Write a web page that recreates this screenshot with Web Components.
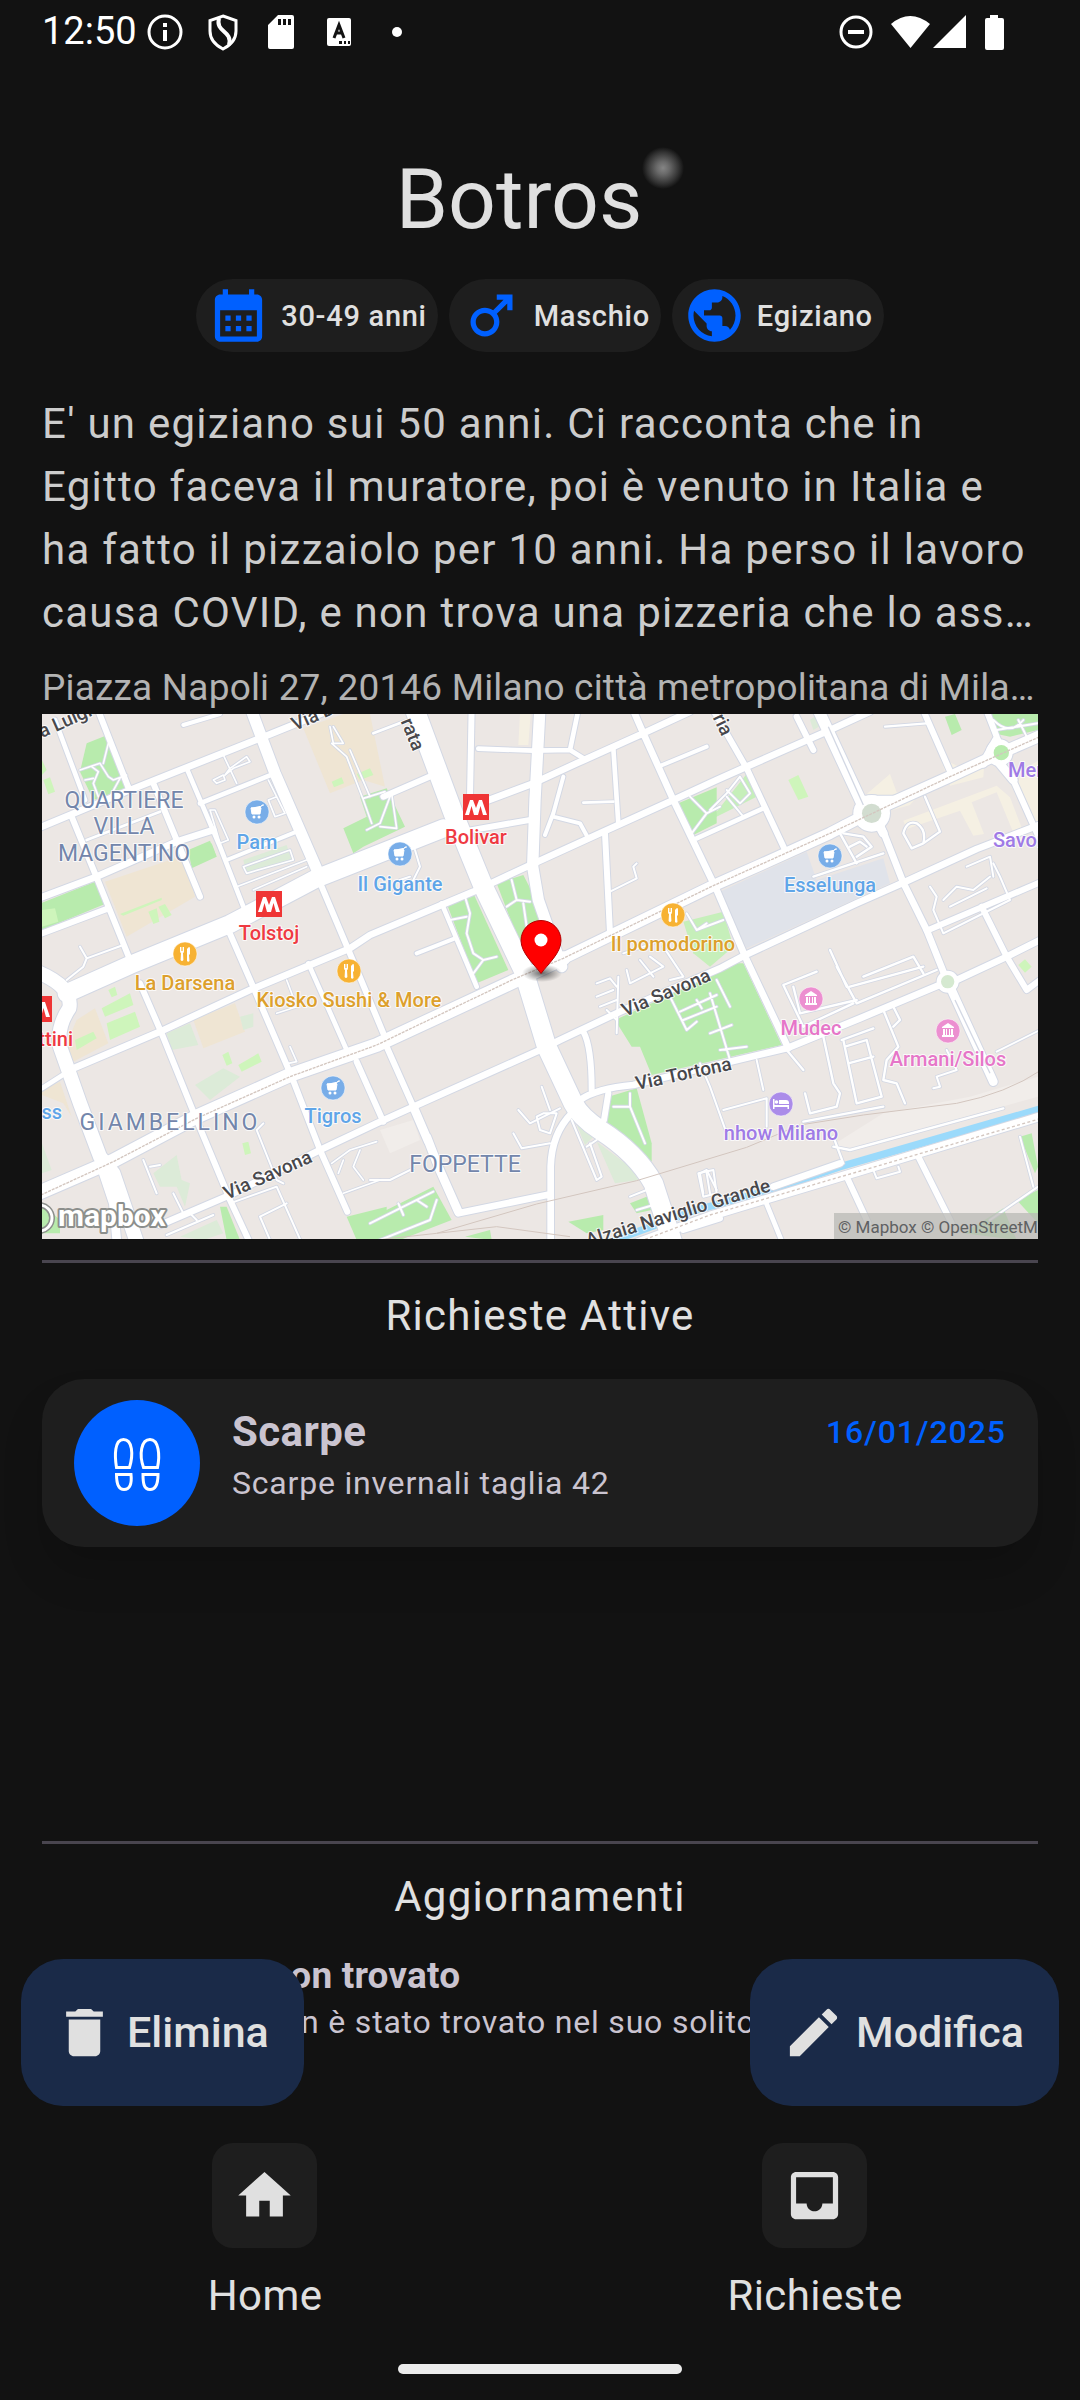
<!DOCTYPE html>
<html lang="it">
<head>
<meta charset="utf-8">
<meta name="viewport" content="width=device-width, initial-scale=1">
<title>Botros</title>
<style>
  html, body { margin: 0; background: #121212; }
  body {
    --bg: #121212; --surface: #1e1e1e; --text: #e0e0e0; --muted: #cac4d0; --accent: #0060ff;
    --track-body: .03em; --track-small: .025em; --track-label: .01em;
    font-family: Roboto, "Noto Sans", sans-serif; color: var(--text);
  }
</style>
</head>
<body>
<app-screen>
  <status-bar slot="status"></status-bar>
  <person-header name="Botros">
    <info-chip icon="calendar">30-49 anni</info-chip>
    <info-chip icon="male">Maschio</info-chip>
    <info-chip icon="globe">Egiziano</info-chip>
  </person-header>
  <person-about>
    E' un egiziano sui 50 anni. Ci racconta che in Egitto faceva il muratore, poi è venuto in Italia e ha fatto il pizzaiolo per 10 anni. Ha perso il lavoro causa COVID, e non trova una pizzeria che lo ass…
    <span slot="address">Piazza Napoli 27, 20146 Milano città metropolitana di Mila…</span>
  </person-about>
  <city-map></city-map>
  <list-section heading="Richieste Attive" grow>
    <request-card heading="Scarpe" date="16/01/2025">Scarpe invernali taglia 42</request-card>
  </list-section>
  <list-section heading="Aggiornamenti" class="updates">
    <update-row heading="Botros non trovato">Botros, non è stato trovato nel suo solito posto</update-row>
  </list-section>
  <action-button slot="actions" icon="trash">Elimina</action-button>
  <action-button slot="actions" icon="pencil">Modifica</action-button>
  <bottom-nav slot="nav">
    <nav-item icon="home">Home</nav-item>
    <nav-item icon="inbox">Richieste</nav-item>
  </bottom-nav>
</app-screen>

<script>
const ICONS = {
  calendar: '<path d="M19 4h-1V2h-2v2H8V2H6v2H5c-1.1 0-2 .9-2 2v14c0 1.100.9 2 2 2h14c1.100 0 2-.9 2-2V6c0-1.100-.9-2-2-2zm0 16H5V10h14v10zM9 14H7v-2h2v2zm4 0h-2v-2h2v2zm4 0h-2v-2h2v2zm-8 4H7v-2h2v2zm4 0h-2v-2h2v2zm4 0h-2v-2h2v2z"/>',
  male: '<path d="M9.500 11c1.930 0 3.500 1.570 3.500 3.500S11.430 18 9.500 18 6 16.430 6 14.500 7.570 11 9.500 11zm0-2C6.460 9 4 11.460 4 14.500S6.460 20 9.500 20s5.500-2.460 5.500-5.500c0-1.160-.36-2.230-.97-3.120L18 7.420V10h2V4h-6v2h2.580l-3.970 3.970C11.730 9.360 10.660 9 9.500 9z"/>',
  globe: '<path d="M12 2C6.480 2 2 6.480 2 12s4.480 10 10 10 10-4.480 10-10S17.520 2 12 2zm-1 17.930c-3.950-.49-7-3.850-7-7.930 0-.62.080-1.210.21-1.790L9 15v1c0 1.100.9 2 2 2v1.930zm6.900-2.540c-.26-.81-1-1.390-1.900-1.390h-1v-3c0-.55-.45-1-1-1H8v-2h2c.55 0 1-.45 1-1V7h2c1.100 0 2-.9 2-2v-.41c2.930 1.190 5 4.060 5 7.410 0 2.080-.8 3.970-2.100 5.390z"/>',
  trash: '<path d="M6 19c0 1.100.9 2 2 2h8c1.100 0 2-.9 2-2V7H6v12zM19 4h-3.500l-1-1h-5l-1 1H5v2h14V4z"/>',
  pencil: '<path d="M3 17.250V21h3.750L17.810 9.940l-3.750-3.750L3 17.250zM20.710 7.040c.39-.39.39-1.020 0-1.410l-2.340-2.340c-.39-.39-1.020-.39-1.410 0l-1.830 1.830 3.750 3.750 1.830-1.830z"/>',
  home: '<path d="M10 20v-6h4v6h5v-8h3L12 3 2 12h3v8z"/>',
  inbox: '<path d="M19 3H4.990c-1.110 0-1.980.89-1.980 2L3 19c0 1.100.88 2 1.990 2H19c1.100 0 2-.9 2-2V5c0-1.110-.9-2-2-2zm0 12h-4c0 1.660-1.350 3-3 3s-3-1.340-3-3H4.990V5H19v10z"/>'
};
const icon = (name) => `<svg class="icon" viewBox="0 0 24 24" aria-hidden="true">${ICONS[name]}</svg>`;
const ICON_CSS = '.icon{width:63px;height:63px;fill:currentColor;flex:none;display:block}';

function define(tag, render) {
  customElements.define(tag, class extends HTMLElement {
    constructor() { super(); this.attachShadow({ mode: 'open' }); }
    connectedCallback() { this.shadowRoot.innerHTML = render(this); }
  });
}

define('app-screen', () => `
  <style>
    :host { display: flex; flex-direction: column; min-height: 100vh; background: var(--bg); }
    main { flex: 1; display: flex; flex-direction: column; padding: 0 42px; position: relative; }
    .actions { position: absolute; left: 21px; right: 21px; bottom: 21px; display: flex; justify-content: space-between; }
  </style>
  <slot name="status"></slot>
  <main><slot></slot><div class="actions"><slot name="actions"></slot></div></main>
  <slot name="nav"></slot>`);

define('status-bar', () => `
  <style>
    :host { display: flex; justify-content: space-between; align-items: center; height: 63px; padding: 0 73px 0 42px; color: #fff; }
    div { display: flex; align-items: center; }
    time { font-size: 38px; line-height: 63px; }
    svg { display: block; height: 38px; fill: currentColor; }
    .icons { gap: 20px; margin-left: 9px; }
  </style>
  <div>
    <time>12:50</time>
    <div class="icons">
    <svg width="38" viewBox="0 0 38 38"><circle cx="19" cy="19" r="16" fill="none" stroke="#fff" stroke-width="3"/><path d="M17 17h4v11h-4zM17 10h4v4h-4z"/></svg>
    <svg width="38" viewBox="0 0 38 38"><path d="M19 3 32 7.500v10.500c0 8-5 14-13 18C11 32 6 26 6 18V7.500z" fill="none" stroke="#fff" stroke-width="3"/><path d="M15 5c-4 15 14 12 10 27" fill="none" stroke="#fff" stroke-width="4"/></svg>
    <svg width="38" viewBox="0 0 38 38"><path fill-rule="evenodd" d="M16 2h14q2 0 2 2v30q0 2-2 2H8q-2 0-2-2V12zm0 4v6h3V6zm5 0v6h3V6zm5 0v6h3V6z"/></svg>
    <svg width="38" viewBox="0 0 38 38"><rect x="7" y="5" width="24" height="28" rx="2"/><path d="m14 25 5-13 5 13m-8-5h6" fill="none" stroke="#121212" stroke-width="3"/><path d="M19 28h3v3h-3zm5 0h2v3h-2zm4 0h2v3h-2z" fill="#121212"/></svg>
    <svg width="38" viewBox="0 0 38 38"><circle cx="19" cy="19" r="5"/></svg>
    </div>
  </div>
  <div>
    <svg width="38" viewBox="0 0 38 38"><circle cx="19" cy="19" r="15" fill="none" stroke="#fff" stroke-width="3"/><path d="M11 17h16v4H11z"/></svg>
    <svg width="132" viewBox="0 0 132 38"><path d="M16 11Q35-5 55 11L35.500 35zM58 35 91 2v33z"/><path d="M115 2h8v3h4q2 0 2 2v28q0 2-2 2h-15q-2 0-2-2V7q0-2 2-2h3z"/></svg>
  </div>`);

define('person-header', (el) => `
  <style>
    :host { display: block; padding: 84px 0 40px; }
    .title { display: flex; justify-content: center; margin-bottom: 27px; }
    h1 { margin: 0; font-weight: 400; font-size: 84px; line-height: 105px; }
    .glow { width: 42px; height: 42px; border-radius: 50%;
      background: radial-gradient(circle closest-side, #858585 0, #6a6a6a 30%, #333 75%, rgba(18,18,18,0) 100%); }
    .chips { display: flex; justify-content: center; gap: 11px; }
  </style>
  <div class="title"><h1>${el.getAttribute('name')}</h1><span class="glow"></span></div>
  <div class="chips"><slot></slot></div>`);

define('info-chip', (el) => `
  <style>
    :host { display: flex; align-items: center; gap: 11px; padding: 5px 11px; border-radius: 37px; background: var(--surface);
      font-size: 29px; line-height: 42px; font-weight: 500; letter-spacing: var(--track-small); }
    ${ICON_CSS} .icon { color: var(--accent); }
  </style>${icon(el.getAttribute('icon'))}<span><slot></slot></span>`);

define('person-about', () => `
  <style>
    :host { display: block; min-width: 0; }
    p { margin: 0; overflow: hidden; }
    .bio { display: -webkit-box; -webkit-box-orient: vertical; -webkit-line-clamp: 4; font-size: 42px; line-height: 63px;
      color: #ccc; letter-spacing: var(--track-body); margin-bottom: 17px; }
    .address { font-size: 37px; line-height: 53px; color: #b3b3b3; letter-spacing: .005em; white-space: nowrap; text-overflow: ellipsis; }
  </style>
  <p class="bio"><slot></slot></p>
  <p class="address"><slot name="address"></slot></p>`);

define('list-section', (el) => `
  <style>
    :host { display: flex; flex-direction: column; min-width: 0; }
    :host([grow]) { flex: 1; margin-top: 21px; }
    :host(.updates) { height: 286px; overflow: hidden; }
    hr { width: 100%; box-sizing: border-box; height: 3px; margin: 0 0 21px; border: 0; background: #49454f; flex: none; }
    h2 { margin: 0; text-align: center; font-weight: 400; font-size: 42px; line-height: 63px; letter-spacing: var(--track-body); }
    .items { padding-top: 21px; }
    :host([grow]) .items { padding-top: 32px; }
  </style>
  <hr><h2>${el.getAttribute('heading')}</h2><div class="items"><slot></slot></div>`);

define('request-card', (el) => `
  <style>
    :host { display: flex; gap: 32px; padding: 21px 32px; border-radius: 42px; background: var(--surface); box-shadow: 0 28px 40px rgba(0,0,0,.15); color: var(--muted); }
    .badge { width: 126px; height: 126px; border-radius: 50%; background: var(--accent); display: grid; place-items: center; flex: none; }
    .badge svg { width: 63px; height: 63px; fill: none; stroke: #fff; stroke-width: 3; }
    .body { flex: 1; min-width: 0; }
    header { display: flex; justify-content: space-between; align-items: center; }
    h3 { margin: 0; font-size: 42px; line-height: 63px; font-weight: 700; letter-spacing: var(--track-label); }
    time { font-size: 32px; line-height: 42px; font-weight: 500; color: var(--accent); letter-spacing: var(--track-body); }
    p { margin: 0; font-size: 32px; line-height: 40px; letter-spacing: var(--track-small); }
  </style>
  <div class="badge"><svg viewBox="0 0 63 63" aria-hidden="true">
    <path d="M10.500 35.500c-2-12-2-28 7-28s10 15 6 28zM10.500 42.500h14.500c1 9-1 15-7 15s-7.500-6-7.500-15z"/>
    <path d="M37.500 35.500c-4.500-13-2.500-28 6.500-28s10 16 7.500 28zM37 42.500h15c0 9-2 15-8 15s-7-6-7-15z"/></svg></div>
  <div class="body">
    <header><h3>${el.getAttribute('heading')}</h3><time>${el.getAttribute('date')}</time></header>
    <p><slot></slot></p>
  </div>`);

define('update-row', (el) => `
  <style>
    :host { display: block; padding-left: 107px; color: var(--muted); white-space: nowrap; overflow: hidden; }
    h3 { margin: 0; font-size: 37px; line-height: 53px; font-weight: 700; letter-spacing: .005em; }
    p { margin: 0; font-size: 32px; line-height: 40px; letter-spacing: var(--track-small); overflow: hidden; text-overflow: ellipsis; }
  </style>
  <h3>${el.getAttribute('heading')}</h3><p><slot></slot></p>`);

define('action-button', (el) => `
  <style>
    :host { display: block; }
    button { display: flex; align-items: center; gap: 11px; border: 0; margin: 0; padding: 42px 35px 42px 32px; border-radius: 42px;
      background: #1a2a48; color: inherit; font: 500 43px/63px Roboto, "Noto Sans", sans-serif; }
    ${ICON_CSS}
  </style><button type="button">${icon(el.getAttribute('icon'))}<span><slot></slot></span></button>`);

define('bottom-nav', () => `
  <style>
    :host { display: block; padding: 16px 0 26px; background: var(--bg); }
    nav { display: grid; grid-template-columns: 1fr 1fr; gap: 20px; margin-bottom: 37px; }
    .pill { width: 284px; height: 10px; margin: 0 auto; border-radius: 5px; background: #ececec; }
  </style><nav><slot></slot></nav><div class="pill"></div>`);

define('nav-item', (el) => `
  <style>
    :host { display: flex; justify-content: center; }
    a { display: flex; flex-direction: column; align-items: center; gap: 16px; color: inherit; text-decoration: none;
      font-size: 42px; line-height: 63px; letter-spacing: var(--track-label); }
    .box { padding: 21px; border-radius: 21px; background: var(--surface); }
    ${ICON_CSS}
  </style><a href="#"><span class="box">${icon(el.getAttribute('icon'))}</span><span><slot></slot></span></a>`);

/* ---- map ---- */
const AREAS = {
  '#f5f0e3': ['2510,282 2580,222 2600,277 2665,287 2640,315 2580,332 2520,317', '2730,172 2790,202 2865,162 2860,232 2760,257', '2620,362 2900,257 2940,292 2990,422 2960,422 2900,277 2825,307 2862,402 2830,407 2790,332 2630,387', '2975,212 3024,182 3024,412 2960,262', '1470,42 1502,42 1495,135 1465,135'],
  '#efe5d3': ['225,545 465,465 495,590 290,710', '820,85 940,42 1020,42 1065,260 1000,240 900,280', '490,960 615,910 645,995 520,1045', '140,960 195,925 235,1030 130,1085 110,1030', '36,1170 90,1145 125,1250 100,1210 36,1185'],
  '#e0e3ea': ['2070,575 2330,455 2360,540 2560,475 2580,550 2150,745'],
  '#f1edea': ['2400,1340 2560,1240 2820,1190 3024,1130 3024,1190 2450,1350', '1050,1290 1150,1260 1170,1320 1080,1360'],
  '#dcebd8': ['410,1000 480,970 505,1035 425,1050', '630,950 670,940 670,980 640,990', '495,1155 580,1105 630,1130 540,1200', '370,1420 440,1365 455,1440 480,1450 465,1520 440,1460 390,1460', '640,480 770,435 785,480 650,525', '1700,1325 1800,1400 1825,1440 1755,1450', '1635,1260 1690,1310 1665,1335', '36,1330 65,1410 36,1420', '450,1610 560,1560 580,1600 520,1620', '2340,60 2365,42 2375,75 2350,90'],
  '#c6efba': ['1960,665 2080,635 2110,740 2040,800 1990,760', '2040,360 2150,222 2180,290'],
  '#b8ebad': ['170,130 225,108 290,265 190,300 150,215', '36,608 195,545 225,612 36,690', '475,450 540,422 560,470 485,505', '940,385 1010,350 990,290 1070,265 1125,380 1000,440 970,460', '1250,610 1330,580 1435,810 1340,850', '1400,550 1480,525 1560,680 1480,760', '1945,310 2060,262 2060,370 1990,405', '2880,42 3024,42 3024,90 2940,110 2890,100', '2745,50 2775,42 2795,90 2765,105', '1755,960 1930,880 2090,790 2140,790 2255,1035 1865,1125 1830,1040 1805,1040', '1735,1190 1820,1165 1865,1330 1865,1385 1725,1275', '1020,1555 1210,1460 1265,1560 1110,1620 1020,1620', '1305,1610 1380,1590 1385,1620', '1615,1565 1720,1545 1720,1590 1670,1600', '950,1550 1070,1520 1070,1620 980,1620', '2970,1310 3005,1300 3024,1400 3015,1420', '2800,1600 2920,1525 2960,1620', '2960,1500 3024,1470 3024,1570', '1800,1510 1850,1490 1865,1530 1820,1540', '570,1520 590,1520 630,1620 590,1620', '36,1510 90,1560 90,1600 36,1600', '520,450 545,430 560,470'],
  '#cef5bb': ['270,642 395,593 395,600 280,647', '355,635 380,625 388,665 370,672', '385,620 405,612 425,645 405,655', '2275,240 2305,225 2335,290 2305,300', '215,925 300,880 310,915 225,950', '230,970 315,935 330,980 240,1020', '135,1020 190,995 200,1015 140,1050', '625,1095 685,1060 695,1085 635,1115', '577,1065 595,1055 607,1090 590,1097', '637,1330 655,1325 663,1360 645,1365', '905,245 935,232 942,250 912,262', '980,222 1020,205 1030,225 990,240', '2965,795 2985,778 3005,800 2985,818', '36,630 75,625 85,665 36,680', '36,180 50,210 36,225', '40,240 60,232 75,275 55,283', '235,870 255,860 262,885 245,892']
};
const ROADS = [
  [5, 'M150,210 210,190 235,230 250,240 290,225M185,200 205,215 190,250 205,290M235,130 220,190M270,235 240,290M165,240 190,235'],
  [5, 'M550,240 580,225 585,240 560,250zM585,225 600,205 650,170 660,185 610,205zM580,165 620,250M715,240 765,340 735,350 715,300 740,290'],
  [5, 'M540,330 555,330 595,420 570,430zM640,500 780,450 790,480 650,520zM620,560 830,480M670,570 830,500'],
  [5, 'M900,80 910,130 940,130 910,80M905,130 950,170 1000,300 1025,370M960,150 1020,290M1000,295 1065,275M1080,290 1050,370 1010,390M1085,280 1100,385 1050,380'],
  [6, 'M150,740 170,775 160,800 110,840M170,775 280,735'],
  [6, 'M340,1380 380,1480M360,1400 390,1395M430,1480 460,1540M480,1540 500,1560M700,1270 680,1290 740,1440 760,1450M600,1510 740,1460 820,1640M690,1550 770,1510M410,1605 550,1545M690,1550 720,1620'],
  [5, 'M905,1390 960,1350 1040,1325M940,1380 925,1420M990,1350 970,1400 1000,1440M940,1480 1050,1440M770,840 800,920 740,940M780,1040 800,1085 775,1090'],
  [6, 'M1020,1440 1080,1440 1150,1405M1020,1570 1120,1520 1210,1475M1105,1510 1120,1545M1160,1500 1190,1520M1050,1620 1200,1560 1220,1500'],
  [6, 'M1305,590 1320,640 1310,700 1330,760 1360,780 1400,770M1260,660 1310,650M1360,780 1330,820M1445,540 1460,600 1430,620M1460,600 1500,605M1480,610 1490,680'],
  [6, 'M1535,1160 1560,1230M1465,1230 1500,1270 1590,1225M1450,1300 1475,1345 1560,1330M1520,1250 1530,1290 1560,1300 1580,1240 1540,1240zM1625,1260 1700,1440 1715,1430 1680,1330M1670,1340 1700,1320'],
  [6, 'M1740,575 1820,535 1810,500 1820,490M1140,530 1110,540 1140,560 1170,500 1155,450'],
  [6, 'M1765,830 1760,1000M1700,850 1740,835 1760,860M1700,890 1750,870M1710,920 1760,900M1730,930 1760,960M1790,810 1800,850 1900,800 1860,770M1830,780 1870,830M1900,740 1960,830 1920,840M1780,760 1870,730'],
  [6, 'M1920,890 1970,990 2000,965M1950,935 2060,885M1960,960 2060,920M2000,900 2015,925M2040,880 2100,1080M2060,840 2100,920M2040,1000 2105,975M2070,1050 2150,1040'],
  [6, 'M1750,1220 1800,1220 1800,1180M1800,1220 1845,1330M2010,1090 2040,1160 2090,1300M2080,1230 2210,1195 2210,1280M2180,1080 2200,1170M2010,1420 2030,1410 2060,1470M2010,1420 2020,1480'],
  [6, 'M1970,640 2000,690 2080,660M2000,690 2030,670M1980,290 2030,340 1985,400M2030,340 2070,320M2040,330 2090,280 2130,230 2160,280 2130,310 2090,270M2090,290 2140,350'],
  [7, 'M2565,80 2690,70M2620,400Q2630,360 2660,370 2690,390 2680,430L2645,445zM2680,430 2730,395 2685,290M2430,400 2480,490M2440,400 2500,410 2525,440 2480,470M2460,440 2490,425 2510,440M2350,530 2560,460'],
  [6, 'M2700,560 2720,590 2710,630 2740,700 2940,600 2910,530 2890,490M2810,500 2880,470 2890,530M2740,600 2780,560 2830,570 2880,530M2760,620 2870,565'],
  [7, 'M2260,855 2360,815M2260,855 2320,980M2320,980 2470,910M2420,800 2480,910 2720,810M2460,860 2680,800M2290,860 2310,940 2480,900M2400,750 2450,860M2500,830 2650,770 2680,820'],
  [7, 'M2435,1020 2530,985M2440,1020 2480,1210 2555,1190 2510,1020 2445,1040M2455,1090 2530,1070M2560,930 2605,1040 2570,1080 2560,1140 2600,1150 2625,1210M2590,920 2610,960 2590,980M2380,1010 2410,1150 2430,1180 2420,1220 2340,1240 2325,1180M2320,1265 2560,1220M2270,1050 2320,1110M2410,1310 2440,1390M2410,1340 2460,1350 2920,1225'],
  [6, 'M2750,1050 2780,1110 2720,1130 2730,1160 2710,1165M2530,1410 2540,1435 2610,1415 2605,1400M2970,1310 3010,1460M2900,1055 3030,990M2880,1560 3024,1460M2965,60 2990,110M2890,60Q2940,110 2980,60M2900,90 3024,70'],
  [6, 'M2005,1420 2050,1410 2060,1480 2020,1490zM2030,1420 2040,1480M1800,1490 1850,1470M1820,1530 1870,1515'],
  [8, 'M170,420 390,335M1030,100 1120,65M1660,308 1750,305'],
  [12, 'M460,75 570,42M590,480 800,395M1600,230 1570,340 1545,405M1570,350 1650,370 1672,410M1885,200 2030,140M1160,760 1275,715'],
  [14, 'M510,310 740,218M470,205 570,440 640,620M75,60 165,300M1345,146 1510,152 1620,150 1665,178M1645,30 1620,150M1750,145 1765,370M2000,415 2200,325M1235,610 1340,860M835,790 950,1050M2205,1500 2262,1640M1200,410 1280,395M36,1165 130,1105'],
  [18, 'M200,20 300,275M125,350 205,545 300,780M370,250 440,420 510,590M36,700 235,625M595,690 665,850 785,1130 870,1350 952,1535M330,850 395,1000 500,1260 600,1500 665,1640M875,560 985,820 1060,1000M980,1085 1060,1265M1325,20 1320,290M1270,400 1510,358M1725,400 1740,700M1060,290 1210,225M1660,995Q1685,1040 1685,1170M1735,1180 1722,1260M2055,40 2150,205 2265,450M2675,20 2765,225M2855,620 2930,770 2990,870 3030,840M2690,692 3040,543M2450,1430 2515,1570M2665,1370 2765,1570M1070,1040 1150,1220M1960,1590 2070,1555M2865,20 2900,110M2945,230 3030,420M2300,50 2350,150'],
  [20, 'M0,395 300,270 690,115 900,30M0,605 200,530 440,425 550,390M130,1105 390,995 660,870 960,745 1020,705 1330,575 1490,500 1720,395 1930,300 2060,240 2150,200 2400,90 2520,35M390,1575 600,1485 870,1350 1040,1270 1150,1220 1530,1050 1590,1020 1770,935 2070,805 2140,768 2480,610 2620,548 2840,447 3040,370M1650,1200Q1700,1165 1810,1155L2100,1085 2270,1045 2490,955 2740,850 2780,840 2930,770 3034,718M1350,310 1510,250 1640,190 1840,100 1980,35M1805,20 1840,100 1930,300 2060,570 2150,780 2275,1045M2550,370 2620,548 2690,690 2750,840M1625,1240Q1565,1300 1562,1400L1562,1640M1285,1540 1550,1485M2230,1460 2430,1390'],
  [26, 'M2753,845 2890,1145M210,1390 250,1510 262,1640M1750,1655 2040,1548 2450,1425 3030,1250M1190,1310 1225,1400 1285,1535M1150,1220 1195,1325M2440,375 2500,350M2530,345 2560,400M2500,300 2600,300M2860,190 2900,120M2900,180 2950,240'],
  [34, 'M660,20 735,220 870,530M1530,20 1515,300 1508,500 1525,600 1595,800M2365,30 2505,330M1600,775 2050,557 2190,495 2400,400 2525,335 2760,230 2910,160 3034,106'],
  [42, 'M0,1490 250,1382 500,1250 780,1125 1040,1035 1460,840 1600,775M20,815Q130,860 118,925 80,980 90,1040L150,1210 210,1370 250,1420 325,1640'],
  [54, 'M110,880 300,795 600,672 860,535 1240,385'],
  [58, 'M1140,-10 1270,340 1360,560 1480,810 1550,1040 1630,1210Q1650,1250 1710,1290 1820,1360 1870,1450L1935,1650']
];
const streets = () => {
  const circles = (r1, r2, r3, f) => `<g fill="${f}"><circle cx="2525" cy="340" r="${r1}"/><circle cx="2908" cy="158" r="${r2}"/><circle cx="2753" cy="845" r="${r3}"/></g>`;
  return Object.entries(AREAS).map(([f, list]) => list.map((p) => `<polygon fill="${f}" points="${p}"/>`).join('')).join('')
    + '<path d="M1700,1640 2000,1530 2240,1465 2430,1400 3034,1226" fill="none" stroke="#9bdafb" stroke-width="22"/>'
    + '<g fill="none" stroke-linecap="round" stroke-linejoin="round">'
    + ROADS.map(([w, d]) => `<path d="${d}" stroke="#d3d8e4" stroke-width="${w + (w < 9 ? 5 : 6)}"/>`).join('')
    + circles(58, 43, 36, '#d3d8e4')
    + ROADS.map(([w, d]) => `<path d="${d}" stroke="#fff" stroke-width="${w}"/>`).join('') + '</g>'
    + circles(55, 40, 33, '#fff')
    + '<circle cx="2525" cy="340" r="29" fill="#d2ddd0"/><circle cx="2914" cy="158" r="23" fill="#b8ebad"/><circle cx="2753" cy="845" r="20" fill="#d5e9d0"/>'
    + '<g fill="none" stroke="#d3c6bf" stroke-width="4"><path stroke-dasharray="9 3" d="M0,1500 250,1385 500,1255 780,1130 1040,1035 1450,838 1600,775 2050,557 2400,400 2760,230 3034,108"/><path stroke-dasharray="9 7" d="M1800,1635 2040,1545 2450,1425 3034,1255"/><path stroke-width="3" d="M1040,1620 1220,1600 1520,1512 1820,1442 2150,1342 2310,1275 2500,1245 2780,1210Q2930,1180 3034,1110M1220,1600 1400,1580 1620,1610"/></g>'
    + '<path d="M2395,80 2500,315M2775,900 2880,1120" stroke="#d3d8e4" stroke-width="4"/>';
};
const glyph = {
  cart: '<path d="M-6-4h9l2-3h2M-6-4l1 6h8l1-6z" stroke="#fff" stroke-width="1" fill="#fff"/><circle cx="-3" cy="5" r="1.500"/><circle cx="2" cy="5" r="1.500"/>',
  food: '<path d="M-5-7v4q0 2 1 2l-.4 7q1.400 2 2.800 0L-2-1q1 0 1-2v-4h-1v4h-.6v-4h-.8v4h-.6v-4zM2 7V-5q3-4 3 0v5l-1 1 .5 6q-1.200 1.500-2.500 0z"/>',
  museum: '<path d="M0-8 6-4v1H-6v-1zM-5-2h2v6h-2zM-2-2h1v6h-1zM1-2h1v6H1zM3-2h2v6H3zM-6 4H6v2H-6z"/>',
  bed: '<path d="M-8-5h1.500v6H8v4H6.500V3h-13v2H-8zM-2-4h7q3 0 3 3v1H-2z"/><circle cx="-4.500" cy="-2" r="1.800"/>'
};
const poi = (x, y, ly, name, color, kind, dot = color) =>
  `<g transform="translate(${x} ${y})"><circle r="12" fill="${dot}" stroke="#fff" stroke-opacity=".5"/><g fill="#fff">${glyph[kind]}</g></g><text x="${x}" y="${ly}" text-anchor="middle" fill="${color}">${name}</text>`;
const metro = (x, y) => `<g transform="translate(${x} ${y})"><rect x="-13" y="-13" width="26" height="26" fill="#ef3535"/><path d="M-11 8-6-7h3L0 1 3-7h3l5 15H7L4.500-1 2 8h-4l-2.500-9L-7 8z" fill="#fff"/></g>`;
const street = (x, y, a, t, anchor = 'start') => `<text transform="translate(${x} ${y}) rotate(${a})" text-anchor="${anchor}">${t}</text>`;

define('city-map', () => `
  <style>
    :host { display: block; flex: none; }
    svg { display: block; width: 100%; height: auto; background: #ece7e4; }
    text { font-family: Roboto, "Noto Sans", sans-serif; font-size: 20px; font-weight: 500; paint-order: stroke; stroke: #fffc; stroke-width: 2px; stroke-linejoin: round; }
    .area text { font-size: 23px; font-weight: 400; fill: #7386ab; }
    .street text { font-size: 19px; fill: #48484c; }
    .credit { font-size: 17px; font-weight: 400; fill: #5f6163; stroke: none; }
    .logo { font-size: 30px; font-weight: 700; fill: #fff; stroke: #8c8f8c; stroke-width: 4px; }
  </style>
  <svg viewBox="0 0 996 525" role="img" aria-label="Mappa: Piazza Napoli 27, Milano">
    <g transform="scale(.333333) translate(-36 -42)">${streets()}</g>
    <g class="area" text-anchor="middle"><text x="82" y="94">QUARTIERE</text><text x="82" y="120">VILLA</text><text x="82" y="147">MAGENTINO</text>
      <text x="128" y="416" letter-spacing="3">GIAMBELLINO</text><text x="423" y="458">FOPPETTE</text></g>
    <g class="street">
      ${street(0, 24, -24, 'a Luigi')}${street(253, 17, -24, 'Via B')}${street(371, 38, 68, 'rata', 'end')}${street(680, 23, 64, 'ria', 'end')}
      ${street(185, 486, -24, 'Via Savona')}${street(583, 303, -23, 'Via Savona')}${street(595, 376, -12, 'Via Tortona')}${street(546, 533, -17, 'Alzaia Naviglio Grande')}
    </g>
    ${poi(215, 98, 135, 'Pam', '#5fa5e8', 'cart', '#78ade8')}
    ${poi(358, 140, 177, 'Il Gigante', '#5fa5e8', 'cart', '#78ade8')}
    ${poi(788, 142, 178, 'Esselunga', '#5fa5e8', 'cart', '#78ade8')}
    ${poi(291, 374, 409, 'Tigros', '#5fa5e8', 'cart', '#78ade8')}
    <text x="20" y="405" text-anchor="end" fill="#5fa5e8">ss</text>
    ${poi(143, 240, 276, 'La Darsena', '#dda02c', 'food', '#f7b233')}
    ${poi(307, 257, 293, 'Kiosko Sushi &amp; More', '#dda02c', 'food', '#f7b233')}
    ${poi(631, 201, 237, 'Il pomodorino', '#dda02c', 'food', '#f7b233')}
    ${poi(769, 285, 321, 'Mudec', '#e676c8', 'museum', '#ec8fd0')}
    ${poi(906, 317, 352, 'Armani/Silos', '#e676c8', 'museum', '#ec8fd0')}
    ${poi(739, 390, 426, 'nhow Milano', '#9f7be6', 'bed', '#ab8ce9')}
    <text x="966" y="63" fill="#9f7be6">Mer</text><text x="951" y="133" fill="#9f7be6">Savor</text>
    ${metro(227, 190)}<text x="227" y="226" text-anchor="middle" fill="#ef3a42">Tolstoj</text>
    ${metro(434, 93)}<text x="434" y="130" text-anchor="middle" fill="#ef3a42">Bolivar</text>
    ${metro(-3, 295)}<text x="31" y="332" text-anchor="end" fill="#ef3a42">ttini</text>
    <defs><radialGradient id="shade"><stop offset="0" stop-opacity=".6"/><stop offset="1" stop-opacity="0"/></radialGradient></defs>
    <ellipse cx="500" cy="259" rx="20" ry="9" fill="url(#shade)"/>
    <path d="M499 259.500C492 250 479 239 479 226.500a20 20 0 0 1 40 0C519 239 506 250 499 259.500z" fill="#f00" stroke="#b30000"/><circle cx="499" cy="226" r="6.500" fill="#fff"/>
    <circle cx="-3" cy="504" r="13" fill="none" stroke="#8c8f8c" stroke-width="6"/><circle cx="-3" cy="504" r="13" fill="none" stroke="#fff" stroke-width="3"/>
    <text class="logo" x="16" y="512">mapbox</text>
    <rect x="792" y="499" width="204" height="26" fill="#b9b9b6" fill-opacity=".75"/><text class="credit" x="796" y="519">© Mapbox © OpenStreetM</text>
  </svg>`);
</script>
</body>
</html>
